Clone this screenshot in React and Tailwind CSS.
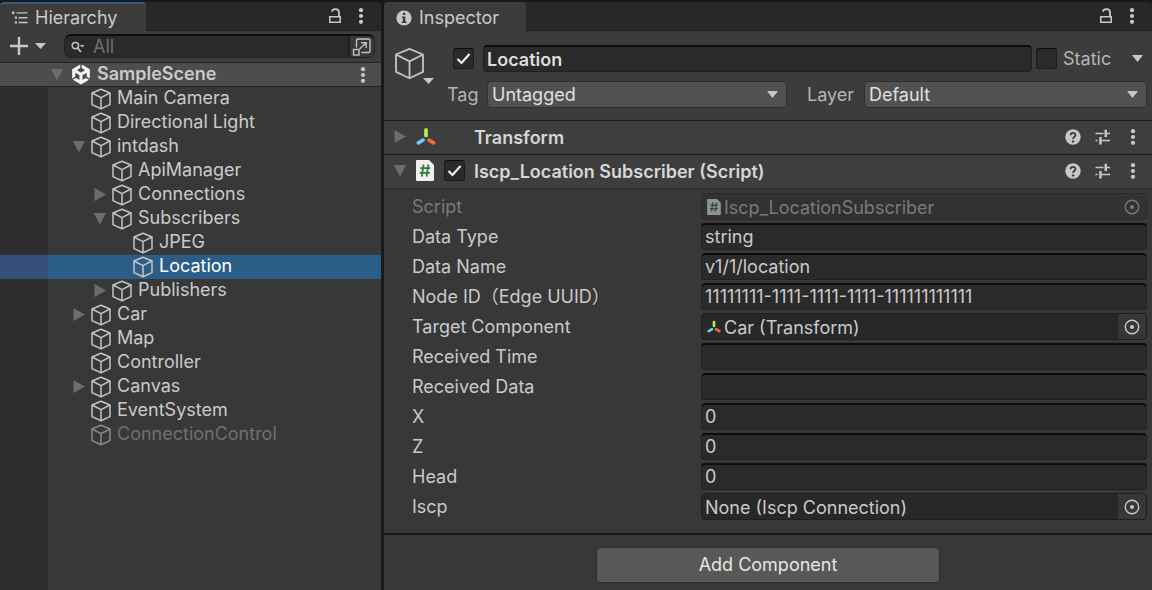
import React from "react";
import { SiUnity } from "react-icons/si";

function Kebab({ className = "" }) {
  return (
    <svg viewBox="0 0 6 18" className={`h-[18px] w-[6px] fill-[#c8c8c8] ${className}`} aria-hidden="true">
      <circle cx="3" cy="3.2" r="2.1" />
      <circle cx="3" cy="9" r="2.1" />
      <circle cx="3" cy="14.8" r="2.1" />
    </svg>
  );
}

function Lock() {
  return (
    <svg viewBox="0 0 14 18" className="h-[18px] w-[14px]" fill="none" stroke="#c8c8c8" aria-hidden="true">
      <rect x="1.75" y="9.75" width="10.5" height="5.5" strokeWidth="1.5" />
      <path d="M4 4.6 C4.6 1.2 11 1 11 5.5 V9.5" strokeWidth="1.8" />
    </svg>
  );
}

function Cube({ className = "h-[22px] w-[20px]", stroke = "#c4c4c4", width = 1.5 }) {
  return (
    <svg viewBox="0 0 20 22" className={`shrink-0 ${className}`} fill="none" stroke={stroke} strokeWidth={width} strokeLinejoin="round" aria-hidden="true">
      <path d="M10 1.2 L19 5 V16.6 L10 20.8 L1 16.6 V5 Z" />
      <path d="M1 5 L10 9.6 L19 5 M10 9.6 V20.8" />
    </svg>
  );
}

function Arrow({ open, className = "" }) {
  return (
    <svg viewBox="0 0 14 14" className={`h-[14px] w-[14px] shrink-0 fill-[#6d6d6d] ${className}`} aria-hidden="true">
      {open ? <path d="M0.8 1 H13 L6.9 12.5 Z" /> : <path d="M1.5 0 V13 L13 6.5 Z" />}
    </svg>
  );
}

function Caret({ className = "h-[6px] w-[12px]" }) {
  return (
    <svg viewBox="0 0 12 6" preserveAspectRatio="none" className={`shrink-0 fill-[#c8c8c8] ${className}`} aria-hidden="true">
      <path d="M0 0 H12 L6 6 Z" />
    </svg>
  );
}

function Axes({ className }) {
  return (
    <svg viewBox="0 0 20 18" className={`shrink-0 ${className}`} fill="none" strokeWidth="3.8" strokeLinecap="round" aria-hidden="true">
      <path d="M10 2 V7.4" stroke="#a8f04a" />
      <path d="M7 12.2 L2.4 14.8" stroke="#6cc8f5" />
      <path d="M13 12.2 L17.6 14.8" stroke="#f4663a" />
    </svg>
  );
}

function ScriptIcon({ className }) {
  return (
    <svg viewBox="0 0 18 21" className={`shrink-0 ${className}`} aria-hidden="true">
      <path d="M1 0 H13 L18 5 V20 Q18 21 17 21 H1 Q0 21 0 20 V1 Q0 0 1 0 Z" fill="#f0f0f0" />
      <path d="M7.6 4.5 L5.8 16.5 M12.4 4.5 L10.6 16.5 M4.2 8.2 H14.2 M3.8 12.8 H13.8" stroke="#2f7a36" strokeWidth="1.7" fill="none" />
    </svg>
  );
}

function Target({ dim }) {
  return (
    <svg viewBox="0 0 16 16" className="h-[16px] w-[16px]" fill="none" aria-hidden="true">
      <circle cx="8" cy="8" r="6.7" stroke={dim ? "#7a7a7a" : "#c8c8c8"} strokeWidth="1.4" />
      <circle cx="8" cy="8" r="2" fill={dim ? "#7a7a7a" : "#c8c8c8"} />
    </svg>
  );
}

function IconButton({ label, children, className = "" }) {
  return (
    <button type="button" aria-label={label} className={`flex shrink-0 items-center justify-center ${className}`}>
      {children}
    </button>
  );
}

function PanelTab({ icon, title, active, width }) {
  return (
    <div className="bg-[#191919] pt-[2px]">
      <div className="flex h-[29px] rounded-t-[4px] bg-[#282828]">
        <h2 className={`flex items-center rounded-t-[4px] bg-[#3c3c3c] ${width} ${active ? "border-t-2 border-[#2c5d87]" : "pt-[2px]"}`}>
          {icon}
          {title}
        </h2>
        <div className="flex flex-1 items-center justify-end gap-[16px] border-b border-[#232323] pr-[17px]">
          <IconButton label={`Lock ${title}`}><Lock /></IconButton>
          <IconButton label={`${title} menu`}><Kebab /></IconButton>
        </div>
      </div>
    </div>
  );
}

const tree = [
  { name: "Main Camera", level: 0 },
  { name: "Directional Light", level: 0 },
  { name: "intdash", level: 0, open: true },
  { name: "ApiManager", level: 1 },
  { name: "Connections", level: 1, open: false },
  { name: "Subscribers", level: 1, open: true },
  { name: "JPEG", level: 2 },
  { name: "Location", level: 2, selected: true },
  { name: "Publishers", level: 1, open: false },
  { name: "Car", level: 0, open: false },
  { name: "Map", level: 0 },
  { name: "Controller", level: 0 },
  { name: "Canvas", level: 0, open: false },
  { name: "EventSystem", level: 0 },
  { name: "ConnectionControl", level: 0, disabled: true },
];

const indents = ["pl-[24px]", "pl-[45px]", "pl-[66px]"];

function TreeRow({ item }) {
  const { name, level, open, selected, disabled } = item;
  return (
    <li className={`flex h-[24px] ${selected ? "bg-[#35507a]" : ""}`}>
      <div className={`ml-[48px] flex flex-1 items-center ${indents[level]} ${selected ? "bg-[#2c5d87] text-white" : disabled ? "text-[#707070]" : ""}`}>
        <span className="flex w-[19px]">{open !== undefined && <Arrow open={open} />}</span>
        <Cube stroke={disabled ? "#8a8a8a" : "#c4c4c4"} />
        <span className="pb-[2px] pl-[6px]">{name}</span>
      </div>
    </li>
  );
}

function Hierarchy() {
  return (
    <section className="flex flex-col border-r-[3px] border-[#191919] bg-[#383838]">
      <PanelTab
        active
        width="w-[146px] pl-[12px]"
        title="Hierarchy"
        icon={
          <svg viewBox="0 0 16 14" className="mr-[7px] h-[14px] w-[16px] fill-[#c4c4c4]" aria-hidden="true">
            <path d="M0 0.5 H2.4 V2.9 H0 Z M4.5 1.2 H15.5 V2.6 H4.5 Z M2.8 5.6 H5 V7.8 H2.8 Z M6.6 6 H15.5 V7.4 H6.6 Z M2.8 10.4 H5 V12.6 H2.8 Z M6.6 10.8 H15.5 V12.2 H6.6 Z" />
          </svg>
        }
      />
      <div className="flex h-[32px] items-center border-b border-[#232323] bg-[#3c3c3c] pb-[1px] pl-[10px] pr-[6px]">
        <button type="button" aria-label="Create" className="flex items-center gap-[7px]">
          <svg viewBox="0 0 18 18" className="h-[18px] w-[18px] fill-[#c8c8c8]" aria-hidden="true">
            <path d="M7.8 0 H10.2 V7.8 H18 V10.2 H10.2 V18 H7.8 V10.2 H0 V7.8 H7.8 Z" />
          </svg>
          <Caret className="h-[6px] w-[11px]" />
        </button>
        <div className="ml-[18px] flex h-[24px] min-w-0 flex-1 items-center overflow-hidden rounded-[7px] border border-t-2 border-[#212121] border-t-[#0d0d0d] bg-[#2a2a2a]">
          <svg viewBox="0 0 14 12" className="ml-[6px] h-[12px] w-[14px] shrink-0" aria-hidden="true">
            <circle cx="4.4" cy="4.6" r="3.2" fill="none" stroke="#c4c4c4" strokeWidth="1.5" />
            <path d="M6.6 7 L10 11" stroke="#c4c4c4" strokeWidth="1.8" />
            <path d="M9 4 H13.4 L11.2 6.4 Z" fill="#c4c4c4" />
          </svg>
          <input aria-label="Search hierarchy" placeholder="All" className="h-full min-w-0 flex-1 bg-transparent pb-[1px] pl-[8px] outline-none placeholder:text-[#707070]" />
          <IconButton label="Open search window" className="h-full w-[26px] border-l-2 border-[#212121] bg-[#383838]">
            <svg viewBox="0 0 20 20" className="h-[20px] w-[20px]" fill="none" stroke="#c4c4c4" strokeWidth="1.4" aria-hidden="true">
              <path d="M4.5 10.5 V3.5 Q4.5 2 6 2 H16.5 Q18 2 18 3.5 V14 Q18 15.5 16.5 15.5 H9.5" />
              <rect x="1.5" y="12.5" width="5.5" height="5.5" />
              <path d="M7.5 12 L14 6 M9 5.8 H14.2 V11" />
            </svg>
          </IconButton>
        </div>
      </div>
      <div className="flex h-[24px] items-center border-b border-[#232323] bg-[#4d4d4d] pl-[50px] pr-[15px]">
        <Arrow open />
        <SiUnity className="ml-[7px] h-[21px] w-[20px] text-[#f4f4f4]" aria-hidden="true" />
        <h3 className="flex-1 pb-[2px] pl-[6px] font-semibold">SampleScene</h3>
        <IconButton label="Scene menu"><Kebab /></IconButton>
      </div>
      <ul className="flex-1 bg-linear-to-r from-[#2e2e2e] from-[48px] to-[#383838] to-[48px]">
        {tree.map((item) => <TreeRow key={item.name} item={item} />)}
      </ul>
    </section>
  );
}

function Check({ label, defaultChecked }) {
  return (
    <span className="relative flex h-[21px] w-[21px] shrink-0">
      <input type="checkbox" id={label} aria-label={label} defaultChecked={defaultChecked} className="peer h-full w-full appearance-none rounded-[3px] border border-[#1c1c1c] border-t-[#0d0d0d] bg-[#2a2a2a]" />
      <svg viewBox="0 0 21 21" className="pointer-events-none absolute inset-0 hidden peer-checked:block" fill="none" stroke="#f0f0f0" strokeWidth="2.2" aria-hidden="true">
        <path d="M4.5 11 L8.5 15 L16.5 6" />
      </svg>
    </span>
  );
}

function Dropdown({ id, value, className }) {
  return (
    <div className={`relative min-w-0 ${className}`}>
      <select id={id} defaultValue={value} className="block h-[27px] w-full appearance-none rounded-[4px] border border-[#303030] bg-[#515151] pl-[4px] pt-[1px] text-[#e0e0e0]">
        <option>{value}</option>
      </select>
      <Caret className="pointer-events-none absolute right-[9px] top-[10px] h-[7px] w-[11px]" />
    </div>
  );
}

function ComponentHeader({ open, icon, title, checkbox }) {
  return (
    <div className="flex h-[34px] items-center border-t border-[#1a1a1a] bg-[#3e3e3e] pb-[2px] pl-[9px] pr-[16px]">
      <Arrow open={open} />
      <span className="ml-[9px] flex w-[28px]">{icon}</span>
      <span className="flex w-[30px]">{checkbox}</span>
      <h3 className="flex-1 pt-[2px] font-semibold text-[#d6d6d6]">{title}</h3>
      <div className="flex items-center">
        <IconButton label={`${title} help`}>
          <svg viewBox="0 0 16 16" className="h-[16px] w-[16px]" aria-hidden="true">
            <circle cx="8" cy="8" r="7.7" fill="#c8c8c8" />
            <path d="M5.6 6.2 C5.6 3.2 10.5 3.2 10.5 6 C10.5 7.8 8.1 7.8 8.1 10" fill="none" stroke="#3a3a3a" strokeWidth="1.8" />
            <circle cx="8.1" cy="12.4" r="1.2" fill="#3a3a3a" />
          </svg>
        </IconButton>
        <IconButton label={`${title} presets`} className="ml-[14px] mr-[19px]">
          <svg viewBox="0 0 16 16" className="h-[16px] w-[16px] fill-[#c8c8c8]" aria-hidden="true">
            <path d="M0.5 3.8 H8.5 V5.2 H0.5 Z M9.5 0.8 H12 V3.8 H15 V5.2 H12 V8 H9.5 Z M0.5 10.8 H2.5 V12.2 H0.5 Z M4.2 8 H6.7 V10.8 H15 V12.2 H6.7 V15.5 H4.2 Z" />
          </svg>
        </IconButton>
        <IconButton label={`${title} menu`}><Kebab /></IconButton>
      </div>
    </div>
  );
}

const fields = [
  { label: "Script", value: "Iscp_LocationSubscriber", kind: "object", icon: "script", dim: true },
  { label: "Data Type", value: "string" },
  { label: "Data Name", value: "v1/1/location" },
  { label: "Node ID（Edge UUID）", value: "11111111-1111-1111-1111-111111111111" },
  { label: "Target Component", value: "Car (Transform)", kind: "object", icon: "axes" },
  { label: "Received Time", value: "" },
  { label: "Received Data", value: "" },
  { label: "X", value: "0" },
  { label: "Z", value: "0" },
  { label: "Head", value: "0" },
  { label: "Iscp", value: "None (Iscp Connection)", kind: "object" },
];

function Field({ field }) {
  const { label, value, kind, icon, dim } = field;
  const id = `field-${label}`;
  return (
    <div className={`grid grid-cols-[289fr_446fr] items-center ${dim ? "text-[#7a7a7a]" : ""}`}>
      <label htmlFor={id}>{label}</label>
      {kind === "object" ? (
        <div className={`flex h-[27px] items-center overflow-hidden rounded-[4px] border ${dim ? "border-[#2b2b2b] bg-[#313131]" : "border-[#202020] bg-[#282828]"}`}>
          {icon === "script" && <ScriptIcon className="ml-[5px] mr-[3px] h-[16px] w-[14px] opacity-50" />}
          {icon === "axes" && <Axes className="ml-[5px] mr-[3px] h-[14px] w-[14px]" />}
          <input id={id} readOnly disabled={dim} defaultValue={value} className={`h-full min-w-0 flex-1 bg-transparent pt-[2px] outline-none ${icon ? "" : "pl-[3px]"}`} />
          <IconButton label={`Select ${label}`} className={`h-full w-[28px] ${dim ? "bg-[#333333]" : "bg-[#373737]"}`}>
            <Target dim={dim} />
          </IconButton>
        </div>
      ) : (
        <input id={id} defaultValue={value} className="h-[27px] w-full min-w-0 rounded-[4px] border border-t-2 border-[#212121] border-t-[#0d0d0d] bg-[#2a2a2a] pb-[1px] pl-[3px] outline-none" />
      )}
    </div>
  );
}

function Inspector() {
  return (
    <section className="col-span-2 flex flex-col bg-[#383838]">
      <PanelTab
        width="w-[142px] pl-[12px]"
        title="Inspector"
        icon={
          <svg viewBox="0 0 16 16" className="mr-[7px] h-[16px] w-[16px]" aria-hidden="true">
            <circle cx="8" cy="8" r="7.6" fill="#c8c8c8" />
            <path d="M6.9 2.8 H9.3 V5 H6.9 Z M5.8 6.4 H9.3 V11.6 H10.4 V13 H5.8 V11.6 H6.9 V7.8 H5.8 Z" fill="#3a3a3a" />
          </svg>
        }
      />
      <div className="flex h-[89px] bg-[#3c3c3c] pl-[10px] pt-[14px]">
        <button type="button" aria-label="Choose icon" className="relative flex h-[40px] w-[42px] shrink-0 items-start pt-[2px]">
          <Cube className="h-[33px] w-[31px]" width={1.2} />
          <Caret className="absolute right-[2px] top-[33px] h-[6px] w-[11px]" />
        </button>
        <div className="flex min-w-0 flex-1 flex-col gap-[9px]">
          <div className="flex items-center pl-[17px] pr-[9px]">
            <Check label="Active" defaultChecked />
            <input aria-label="Name" defaultValue="Location" className="ml-[9px] mr-[4px] h-[27px] min-w-0 flex-1 rounded-[4px] border border-t-2 border-[#212121] border-t-[#0d0d0d] bg-[#2a2a2a] pl-[3px] font-semibold text-[#dedede] outline-none" />
            <Check label="Static" />
            <label htmlFor="Static" className="w-[75px] pl-[6px] text-[#b4b4b4]">Static</label>
            <IconButton label="Static options"><Caret className="h-[7px] w-[11px]" /></IconButton>
          </div>
          <div className="flex items-center pl-[11px] pr-[5px]">
            <label htmlFor="tag" className="w-[40px] shrink-0 text-[#b4b4b4]">Tag</label>
            <Dropdown id="tag" value="Untagged" className="flex-[300]" />
            <label htmlFor="layer" className="ml-[20px] w-[57px] shrink-0 text-[#b4b4b4]">Layer</label>
            <Dropdown id="layer" value="Default" className="flex-[283]" />
          </div>
        </div>
      </div>
      <ComponentHeader open={false} title="Transform" icon={<Axes className="h-[18px] w-[20px]" />} />
      <ComponentHeader
        open
        title="Iscp_Location Subscriber (Script)"
        icon={<ScriptIcon className="h-[21px] w-[18px]" />}
        checkbox={<Check label="Script enabled" defaultChecked />}
      />
      <div className="flex flex-col gap-[3px] border-b-2 border-t border-[#1a1a1a] border-t-[#303030] pb-[13px] pl-[28px] pr-[5px] pt-[4px]">
        {fields.map((field) => <Field key={field.label} field={field} />)}
      </div>
      <div className="flex justify-center pt-[12px]">
        <button type="button" className="h-[36px] w-[344px] rounded-[4px] border border-[#2e2e2e] bg-[#585858] text-[#e6e6e6]">Add Component</button>
      </div>
    </section>
  );
}

export default function App() {
  return (
    <main className="grid min-h-screen grid-cols-3 bg-[#191919] font-['Inter','Noto_Sans_CJK_JP',sans-serif] text-[18px] leading-[22px] text-[#cacaca]">
      <Hierarchy />
      <Inspector />
    </main>
  );
}
